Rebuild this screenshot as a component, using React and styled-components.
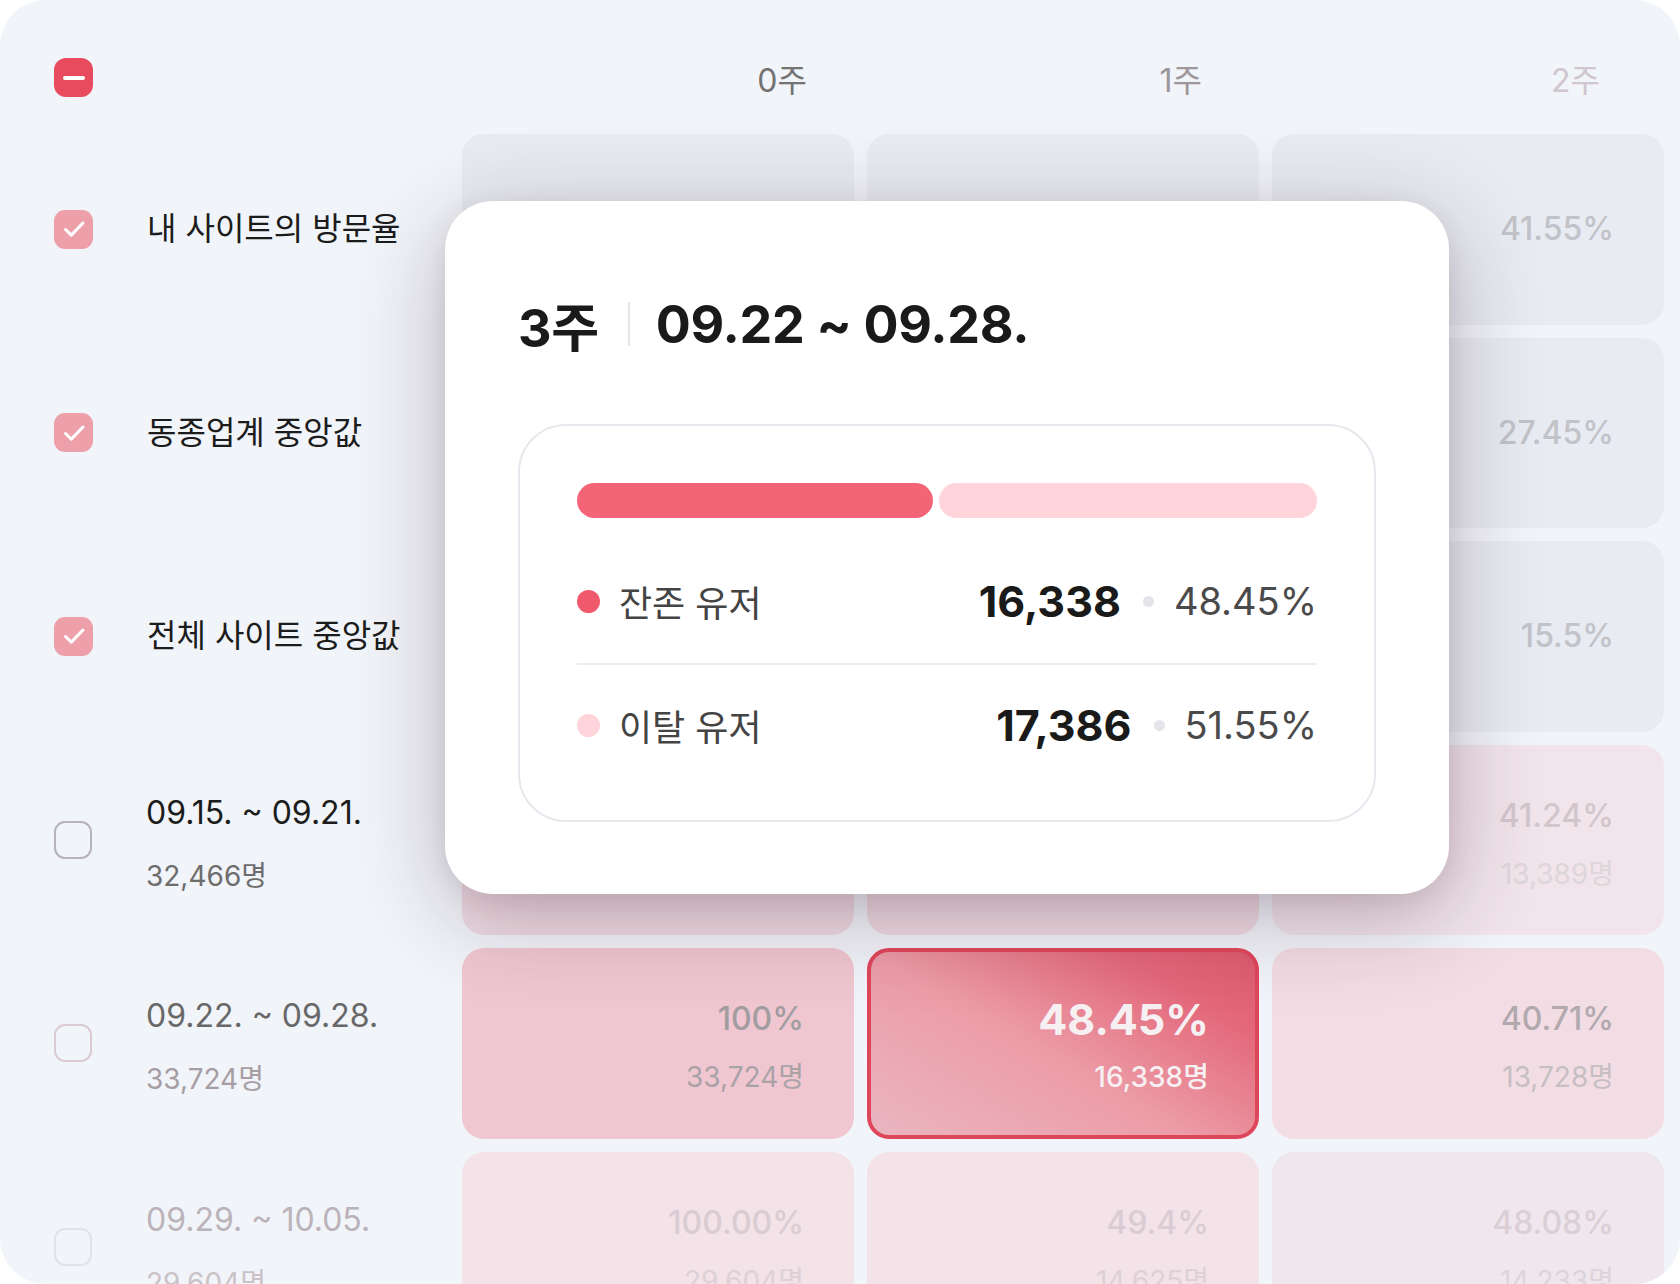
import styled, {createGlobalStyle} from 'styled-components'

const GlobalStyle = createGlobalStyle`
  html, body {
    margin: 0;
    padding: 0;
    background: #ffffff;
  }
  body {
    font-family: Inter, 'Noto Sans CJK KR', sans-serif;
    -webkit-font-smoothing: antialiased;
  }
`

const headers = [
  {text: '0주', color: '#737373', pad: 47},
  {text: '1주', color: '#9d969b', pad: 57},
  {text: '2주', color: '#d1c6cd', pad: 64},
]

const rows = [
  {
    label: '내 사이트의 방문율',
    checked: true,
    cells: [
      {p: '100%', tone: 'gray'},
      {p: '52.31%', tone: 'gray'},
      {p: '41.55%', tone: 'gray'},
    ],
  },
  {
    label: '동종업계 중앙값',
    checked: true,
    cells: [
      {p: '100%', tone: 'gray'},
      {p: '36.12%', tone: 'gray'},
      {p: '27.45%', tone: 'gray'},
    ],
  },
  {
    label: '전체 사이트 중앙값',
    checked: true,
    cells: [
      {p: '100%', tone: 'gray'},
      {p: '21.8%', tone: 'gray'},
      {p: '15.5%', tone: 'gray'},
    ],
  },
  {
    label: '09.15. ~ 09.21.',
    sub: '32,466명',
    labelColor: '#1c1c1c',
    subColor: '#6d6d6d',
    boxColor: '#b8b3b8',
    cells: [
      {p: '100%', c: '32,466명', tone: 'rose'},
      {p: '47.1%', c: '15,291명', tone: 'rose'},
      {p: '41.24%', c: '13,389명', tone: 'faint'},
    ],
  },
  {
    label: '09.22. ~ 09.28.',
    sub: '33,724명',
    labelColor: '#686868',
    subColor: '#a69ea4',
    boxColor: '#dacbd2',
    cells: [
      {p: '100%', c: '33,724명', tone: 'pink'},
      {p: '48.45%', c: '16,338명', tone: 'active'},
      {p: '40.71%', c: '13,728명', tone: 'soft'},
    ],
  },
  {
    label: '09.29. ~ 10.05.',
    sub: '29,604명',
    labelColor: '#bbb3b9',
    subColor: '#cbc2c8',
    boxColor: '#e2e1e7',
    cells: [
      {p: '100.00%', c: '29,604명', tone: 'pale'},
      {p: '49.4%', c: '14,625명', tone: 'pale'},
      {p: '48.08%', c: '14,233명', tone: 'paler'},
    ],
  },
]

const tones = {
  gray: {bg: '#e8ebf2', p: '#c2c2c9', c: '#cfcfd5'},
  rose: {bg: '#eedbe2', p: '#d0c4cb', c: '#dcd5d9'},
  faint: {bg: '#f1e4ea', p: '#d2c6cd', c: '#ddd6da'},
  pink: {bg: '#f0c7d0', p: '#a19da0', c: '#a9a2a7'},
  soft: {bg: '#f2dde4', p: '#b1a9ae', c: '#c7bec3'},
  pale: {bg: '#f3e2e8', p: '#d9ccd3', c: '#ddd1d7'},
  paler: {bg: '#f0e7ee', p: '#dacfd6', c: '#ddd4da'},
}

function CheckIcon() {
  return (
    <svg width="28" height="28" viewBox="0 0 28 28" fill="none">
      <path
        d="M5.5 14.5l5.8 5.6L23 8"
        stroke="#ffffff"
        strokeWidth="3"
        strokeLinecap="round"
        strokeLinejoin="round"
      />
    </svg>
  )
}

export default function App() {
  return (
    <>
      <GlobalStyle />
      <Board>
        <Grid>
          <LabelCell>
            <MinusBox>
              <MinusBar />
            </MinusBox>
          </LabelCell>
          {headers.map(h => (
            <ColHead key={h.text} $color={h.color} $pad={h.pad}>
              {h.text}
            </ColHead>
          ))}

          {rows.map(row => (
            <Row key={row.label} row={row} />
          ))}
        </Grid>

        <Tooltip>
          <TipTitle>
            <span>3주</span>
            <TitleDivider />
            <span>09.22 ~ 09.28.</span>
          </TipTitle>
          <TipBox>
            <Bars>
              <Bar $color="#f46477" style={{flexBasis: '48.45%'}} />
              <Bar $color="#ffd4da" style={{flexBasis: '51.55%'}} />
            </Bars>
            <StatRow $height={124}>
              <Dot $color="#f0596c" />
              <StatLabel>잔존 유저</StatLabel>
              <StatValue>
                <StatNumber>16,338</StatNumber>
                <SepDot />
                <StatPercent>48.45%</StatPercent>
              </StatValue>
            </StatRow>
            <Divider />
            <StatRow $height={120}>
              <Dot $color="#ffd4da" />
              <StatLabel>이탈 유저</StatLabel>
              <StatValue>
                <StatNumber>17,386</StatNumber>
                <SepDot />
                <StatPercent>51.55%</StatPercent>
              </StatValue>
            </StatRow>
          </TipBox>
        </Tooltip>
      </Board>
    </>
  )
}

function Row({row}) {
  return (
    <>
      <LabelCell>
        {row.checked ? (
          <CheckedBox>
            <CheckIcon />
          </CheckedBox>
        ) : (
          <EmptyBox $color={row.boxColor} />
        )}
        <LabelText $two={!!row.sub}>
          <LabelMain $color={row.labelColor}>{row.label}</LabelMain>
          {row.sub && <LabelSub $color={row.subColor}>{row.sub}</LabelSub>}
        </LabelText>
      </LabelCell>
      {row.cells.map((cell, i) => {
        const active = cell.tone === 'active'
        const t = tones[cell.tone] || tones.gray
        return (
          <Cell key={i} $bg={t.bg} $active={active} $two={!!cell.c}>
            <CellPercent $color={t.p} $active={active}>
              {cell.p}
            </CellPercent>
            {cell.c && (
              <CellCount $color={t.c} $active={active}>
                {cell.c}
              </CellCount>
            )}
          </Cell>
        )
      })}
    </>
  )
}

const Board = styled.div`
  position: relative;
  width: 1680px;
  height: 1284px;
  background: #f1f4f9;
  border-radius: 46px;
  overflow: hidden;
`

const Grid = styled.div`
  display: grid;
  grid-template-columns: 395px repeat(3, 392px);
  grid-template-rows: 87px repeat(6, 190.5px);
  column-gap: 13px;
  row-gap: 13px;
  padding: 34px 0 0 54px;
`

const LabelCell = styled.div`
  display: flex;
  align-items: center;
  gap: 54px;
`

const MinusBox = styled.div`
  width: 39px;
  height: 39px;
  border-radius: 12px;
  background: #e84a5e;
  display: flex;
  align-items: center;
  justify-content: center;
`

const MinusBar = styled.div`
  width: 22px;
  height: 4px;
  border-radius: 2px;
  background: #ffffff;
`

const ColHead = styled.div`
  display: flex;
  align-items: center;
  justify-content: flex-end;
  padding-right: ${p => p.$pad}px;
  font-size: 32px;
  color: ${p => p.$color};
`

const CheckedBox = styled.div`
  flex: none;
  width: 39px;
  height: 39px;
  border-radius: 11px;
  background: #eda0aa;
  display: flex;
  align-items: center;
  justify-content: center;
`

const EmptyBox = styled.div`
  flex: none;
  width: 38px;
  height: 38px;
  box-sizing: border-box;
  border-radius: 11px;
  border: 2.5px solid ${p => p.$color};
`

const LabelText = styled.div`
  display: flex;
  flex-direction: column;
  gap: 25px;
  padding-top: ${p => (p.$two ? '7px' : '0')};
`

const LabelMain = styled.div`
  font-size: 32px;
  line-height: 40px;
  color: ${p => p.$color || '#1c1c1c'};
  white-space: nowrap;
`

const LabelSub = styled.div`
  font-size: 28px;
  line-height: 36px;
  color: ${p => p.$color};
`

const Cell = styled.div`
  box-sizing: border-box;
  border-radius: 22px;
  background: ${p =>
    p.$active
      ? 'linear-gradient(30deg, #eab6c0 0%, #ec9ca7 45%, #e3687a 80%, #df5a6d 100%)'
      : p.$bg};
  border: ${p => (p.$active ? '4px solid #e0465a' : 'none')};
  display: flex;
  flex-direction: column;
  align-items: flex-end;
  justify-content: center;
  padding-right: ${p => (p.$active ? '46px' : '50px')};
  padding-top: ${p => (p.$two ? '6px' : '0')};
`

const CellPercent = styled.div`
  font-size: ${p => (p.$active ? '43px' : '32px')};
  font-weight: ${p => (p.$active ? 700 : 500)};
  line-height: 44px;
  color: ${p => (p.$active ? '#f6f0f3' : p.$color)};
`

const CellCount = styled.div`
  margin-top: 18px;
  font-size: 28px;
  font-weight: ${p => (p.$active ? 500 : 400)};
  line-height: 36px;
  color: ${p => (p.$active ? '#f6f0f3' : p.$color)};
`

const Tooltip = styled.div`
  position: absolute;
  left: 445px;
  top: 201px;
  width: 1004px;
  box-sizing: border-box;
  padding: 90px 73px 72px;
  background: #ffffff;
  border-radius: 48px;
  box-shadow: 0 22px 90px rgba(60, 30, 50, 0.3), 0 6px 24px rgba(60, 30, 50, 0.08);
`

const TipTitle = styled.div`
  display: flex;
  align-items: center;
  height: 66px;
  font-size: 52px;
  font-weight: 700;
  color: #1a1a1a;
  letter-spacing: -0.3px;
`

const TitleDivider = styled.div`
  width: 2px;
  height: 44px;
  background: #e6e6ea;
  margin: 0 26px 0 29px;
`

const TipBox = styled.div`
  margin-top: 67px;
  border: 2px solid #e7e8ee;
  border-radius: 48px;
  padding: 57px 57px 35px;
`

const Bars = styled.div`
  display: flex;
  gap: 6px;
  height: 35px;
  margin-bottom: 21px;
`

const Bar = styled.div`
  flex-grow: 1;
  border-radius: 18px;
  background: ${p => p.$color};
`

const StatRow = styled.div`
  display: flex;
  align-items: center;
  height: ${p => p.$height}px;
`

const Dot = styled.div`
  width: 23px;
  height: 23px;
  border-radius: 50%;
  background: ${p => p.$color};
`

const StatLabel = styled.div`
  margin-left: 19px;
  font-size: 36px;
  color: #444444;
`

const StatValue = styled.div`
  margin-left: auto;
  display: flex;
  align-items: center;
`

const StatNumber = styled.div`
  font-size: 43px;
  font-weight: 700;
  color: #1a1a1a;
`

const SepDot = styled.div`
  width: 11px;
  height: 11px;
  border-radius: 50%;
  background: #e4e4ea;
  margin: 0 20px 0 22px;
`

const StatPercent = styled.div`
  font-size: 38px;
  color: #4a4a4a;
`

const Divider = styled.div`
  height: 2px;
  background: #ececf0;
`
